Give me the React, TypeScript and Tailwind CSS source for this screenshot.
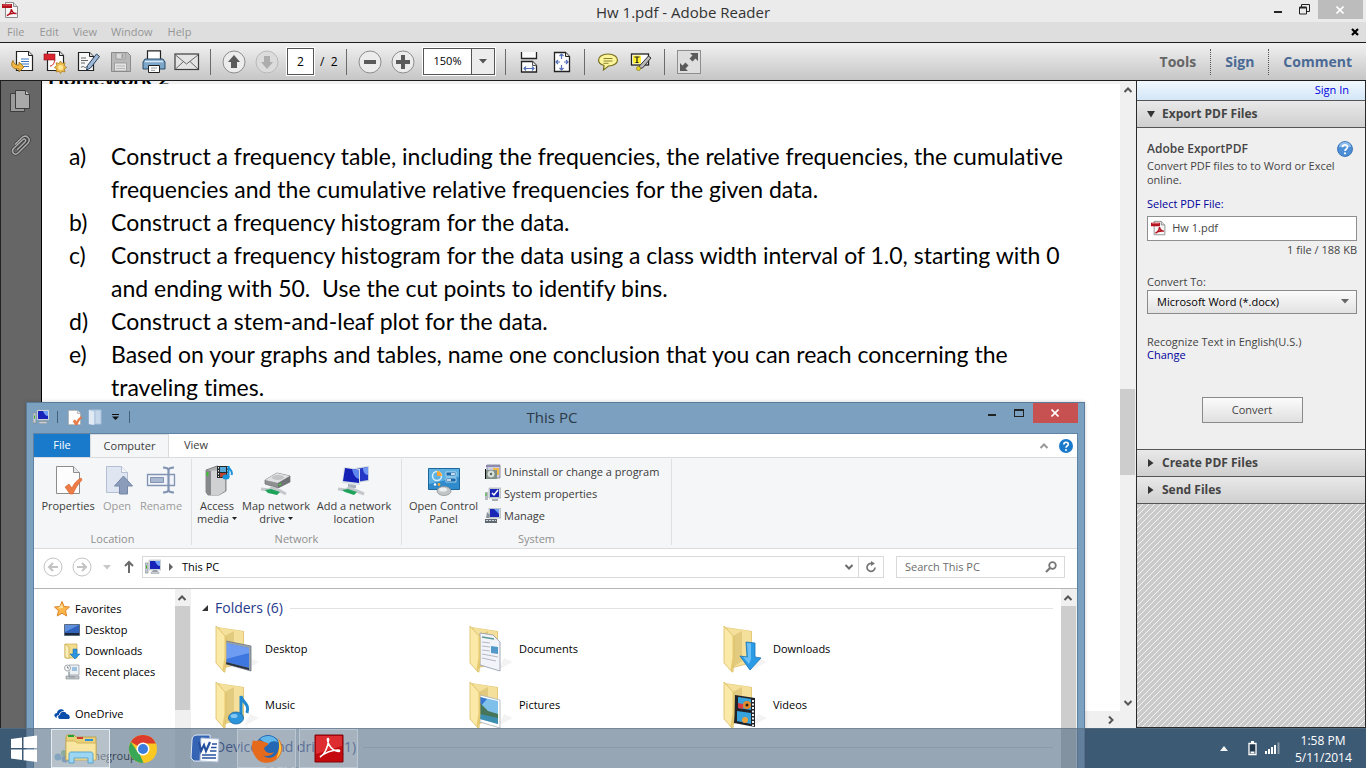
import type { ReactNode } from "react";

const questions = [
  {
    mark: "a)",
    lines: [
      "Construct a frequency table, including the frequencies, the relative frequencies, the cumulative",
      "frequencies and the cumulative relative frequencies for the given data.",
    ],
  },
  { mark: "b)", lines: ["Construct a frequency histogram for the data."] },
  {
    mark: "c)",
    lines: [
      "Construct a frequency histogram for the data using a class width interval of 1.0, starting with 0",
      "and ending with 50.\u00a0 Use the cut points to identify bins.",
    ],
  },
  { mark: "d)", lines: ["Construct a stem-and-leaf plot for the data."] },
  {
    mark: "e)",
    lines: [
      "Based on your graphs and tables, name one conclusion that you can reach concerning the",
      "traveling times.",
    ],
  },
];

/* ---------- shared icons ---------- */

function PdfIcon() {
  return (
    <svg width="17" height="17" viewBox="0 0 17 17">
      <path d="M3.500.5h8l4 4v11h-12z" fill="#f6f6f6" stroke="#8b8b8b" />
      <path d="M11.500.5v4h4" fill="#ddd" stroke="#8b8b8b" />
      <path d="M0 2h10v4H0z" fill="#b3111c" />
      <path d="M1 3h8" stroke="#d9656b" />
      <path d="M5 13.500c2-.5 4-3 4.500-6.500.5 3 2.500 4.500 5 4.500-3-.5-7 0-9.500 2z" fill="none" stroke="#b3111c" strokeWidth="1.500" />
    </svg>
  );
}

function Chevron({ className }: { className?: string }) {
  return (
    <svg width="10" height="8" viewBox="0 0 10 8" className={className}>
      <path d="M1.500 6L5 2.500 8.500 6" fill="none" stroke="currentColor" strokeWidth="2" />
    </svg>
  );
}

function Caret({ className }: { className?: string }) {
  return (
    <svg width="8" height="5" viewBox="0 0 8 5" className={className}>
      <path d="M0 0h8L4 4.500z" fill="currentColor" />
    </svg>
  );
}

function PcIcon() {
  return (
    <svg width="16" height="16" viewBox="0 0 16 16">
      <rect x="0" y="4" width="3" height="10" fill="#c5cbd0" stroke="#7d858c" strokeWidth=".6" />
      <path d="M1 8h1" stroke="#3db52b" strokeWidth="3" />
      <path d="M4 1h12v10H4z" fill="#dbe2e7" stroke="#9aa5ad" strokeWidth=".5" />
      <path d="M5 2h10v8H5z" fill="#1722b8" />
      <path d="M10 2h5v5c-2 0-4-2-5-5z" fill="#6f9ff5" />
      <path d="M8 11h4l1 2H7z" fill="#9aa3a9" />
      <path d="M6 13h8v1.500H6z" fill="#dfe3e6" stroke="#8a9298" strokeWidth=".5" />
    </svg>
  );
}

function CheckPage({ size }: { size: number }) {
  return (
    <svg width={size} height={size} viewBox="0 0 32 32">
      <path d="M4.500 2.500h17l6 6v21h-23z" fill="#fdfdfd" stroke="#8d8d8d" />
      <path d="M21.500 2.500v6h6" fill="#e8e8e8" stroke="#8d8d8d" />
      <path d="M13 23l4-3 3 4c2-5 5-8 9-10l1 2c-4 4-7 9-9 14h-3z" fill="#ec7b46" stroke="#d5602c" strokeWidth=".6" />
    </svg>
  );
}

/* ---------- Reader toolbar ---------- */

function RoundIcon({ d, muted }: { d: string; muted?: boolean }) {
  return (
    <svg width="24" height="24" viewBox="0 0 24 24">
      <circle cx="12" cy="12" r="11" fill={muted ? "#dcdcdc" : "#ececec"} stroke={muted ? "#b9b9b9" : "#8d8d8d"} />
      <path d={d} fill={muted ? "#adadad" : "#5a5a5a"} />
    </svg>
  );
}

function ToolButton({ label, children }: { label: string; children: ReactNode }) {
  return (
    <button aria-label={label} className="flex h-7 w-[33px] items-center justify-center">
      {children}
    </button>
  );
}

function ToolDivider({ className }: { className?: string }) {
  return <div className={`h-[26px] w-px bg-[#6b6b6b] ${className ?? ""}`} />;
}

function OpenIcon() {
  return (
    <svg width="24" height="24" viewBox="0 0 24 24">
      <path d="M6.500 1.500h12l4 4v15h-16z" fill="#fff" stroke="#222" strokeWidth="1.200" />
      <path d="M18.500 1.500v4h4" fill="#ddd" stroke="#222" />
      <path d="M11 9h8M11 11.500h8M11 14h8M11 16.500h8" stroke="#3774c4" strokeWidth="1.200" />
      <path d="M3 10.500c-3 4-1 9 6 8.500v3l5-5-5-5v3c-3 .5-5-1-6-4.500z" fill="#f0b640" stroke="#9a6a12" strokeWidth=".8" />
    </svg>
  );
}

function CreatePdfIcon() {
  return (
    <svg width="24" height="24" viewBox="0 0 24 24">
      <path d="M4.500 1.500h12l4 4v15h-16z" fill="#fff" stroke="#222" strokeWidth="1.200" />
      <path d="M16.500 1.500v4h4" fill="#ddd" stroke="#222" />
      <rect x="1" y="4" width="11" height="6" fill="#d9232e" stroke="#8d1219" strokeWidth=".6" />
      <path d="M7 16c3 0 4-3 5-6" stroke="#c22" fill="none" />
      <path d="M17.500 11l1.500 2.500 3-.8-.8 3 2.500 1.800-2.500 1.500.8 3-3-.8-1.500 2.300-1.500-2.300-3 .8.800-3-2.500-1.500 2.500-1.800-.8-3 3 .8z" fill="#f0be4b" stroke="#a87715" strokeWidth=".7" />
      <circle cx="17.500" cy="17.500" r="2.500" fill="#ffe79a" />
    </svg>
  );
}

function SignIcon() {
  return (
    <svg width="24" height="24" viewBox="0 0 24 24">
      <path d="M2.500 2.500h11l4 4v14h-15z" fill="#f7f7f7" stroke="#222" strokeWidth="1.200" />
      <path d="M13.500 2.500v4h4" fill="#ddd" stroke="#222" />
      <path d="M5 8h5M5 10.500h7M5 13h4M5 17.500c3-3 3 2 6-1" fill="none" stroke="#555" strokeWidth=".9" />
      <path d="M20.500 4l3 2.500-9 11.500-4 2 1-4.500z" fill="#9fb9d6" stroke="#26405d" strokeWidth="1" />
    </svg>
  );
}

function SaveIcon() {
  return (
    <svg width="22" height="22" viewBox="0 0 22 22">
      <path d="M1.500 1.500h16l3 3v16h-19z" fill="#b8b8b8" stroke="#8b8b8b" />
      <path d="M6 2h9v6H6z" fill="#d9d9d9" stroke="#8b8b8b" strokeWidth=".7" />
      <path d="M11.500 3h2v4h-2z" fill="#9a9a9a" />
      <path d="M4.500 12h12v8h-12z" fill="#e3e3e3" stroke="#8b8b8b" strokeWidth=".7" />
      <path d="M6 15h9M6 17.500h9" stroke="#b5b5b5" />
    </svg>
  );
}

function PrintIcon() {
  return (
    <svg width="24" height="24" viewBox="0 0 24 24">
      <path d="M5.500 10V.8h13V10" fill="#fff" stroke="#222" strokeWidth="1.200" />
      <path d="M3 9h18l2 3v7H1v-7z" fill="#7da7ca" stroke="#2b4b68" />
      <path d="M3 11.500h18" stroke="#d6e7f3" strokeWidth="1.500" />
      <path d="M6.500 15.500h11v7h-11z" fill="#fff" stroke="#222" />
      <path d="M9 18h6M9 20.300h4" stroke="#999" />
    </svg>
  );
}

function MailIcon() {
  return (
    <svg width="26" height="18" viewBox="0 0 26 18">
      <rect x="1" y="1" width="23.500" height="15.500" fill="#e4e4e4" stroke="#3e3e3e" strokeWidth="1.200" />
      <path d="M1.500 2l11 9 11.500-9M1.500 16l8-7.500M24 16l-8-7.500" fill="none" stroke="#666" />
    </svg>
  );
}

function FitWidthIcon() {
  return (
    <svg width="18" height="22" viewBox="0 0 18 22">
      <path d="M1.500 1v6.500h15V1" fill="#fafafa" />
      <path d="M1.500 1v6.500h15V1" fill="none" stroke="#222" strokeWidth="1.300" />
      <path d="M1.500 21V10.500h11l4 4V21z" fill="#fff" stroke="#222" strokeWidth="1.300" />
      <path d="M12.500 10.500v4h4" fill="#ddd" stroke="#555" />
      <path d="M3.500 17.500h11M6 15.500l-2 2 2 2M12 15.500l2 2-2 2" fill="none" stroke="#5570b8" strokeWidth="1.200" />
    </svg>
  );
}

function FitPageIcon() {
  return (
    <svg width="18" height="22" viewBox="0 0 18 22">
      <path d="M1.500 1.500h11l4 4v15h-15z" fill="#fff" stroke="#222" strokeWidth="1.300" />
      <path d="M12.500 1.500v4h4" fill="#ddd" stroke="#222" />
      <path d="M8.500 3v5M8.500 14v5M3 11h4M11 11h4M6.500 5l2-2 2 2M6.500 17l2 2 2-2M5 9l-2 2 2 2M13 9l2 2-2 2" fill="none" stroke="#5570b8" strokeWidth="1.200" />
    </svg>
  );
}

function CommentIcon() {
  return (
    <svg width="22" height="20" viewBox="0 0 22 20">
      <path d="M11 2c5.500 0 9.500 2.500 9.500 6s-4 6-9 6l-5 4 .5-4.500C3.500 12.500 1.500 10.500 1.500 8 1.500 4.500 5.500 2 11 2z" fill="#fdf59a" stroke="#77701f" strokeWidth="1.200" />
      <path d="M6.500 6.500h9M6.500 9h9M6.500 11.300h5" stroke="#8a8233" />
    </svg>
  );
}

function HighlightIcon() {
  return (
    <svg width="22" height="20" viewBox="0 0 22 20">
      <rect x="1.500" y="2" width="17" height="11" fill="#fff" stroke="#222" strokeWidth="1.300" />
      <rect x="3" y="3.500" width="8" height="8" fill="#ffef2c" />
      <path d="M4.500 5h5M7 5v5.500M5.500 10.500h3" stroke="#222" strokeWidth="1.200" />
      <path d="M18.500 4l2.500 2-8.500 10-3.500.5.800-3z" fill="#b9b9b9" stroke="#333" />
      <circle cx="8.500" cy="16.500" r="2" fill="#e8d82a" stroke="#8a7d10" strokeWidth=".7" />
    </svg>
  );
}

function FullscreenIcon() {
  return (
    <svg width="24" height="24" viewBox="0 0 24 24">
      <rect x=".5" y=".5" width="23" height="23" fill="#dedede" stroke="#8e8e8e" />
      <path d="M13 3h8v8l-2.500-2.500-3 3-3-3 3-3zM11 21H3v-8l2.500 2.500 3-3 3 3-3 3z" fill="#5a5a5a" />
    </svg>
  );
}

function ReaderToolbar() {
  return (
    <div className="flex h-[39px] shrink-0 items-center border-y border-[#1d1d1d] bg-linear-to-b from-[#f1f1f1] to-[#c6c6c6] pr-[14px] pl-[5px]">
      <ToolButton label="Open"><OpenIcon /></ToolButton>
      <ToolButton label="Create PDF"><CreatePdfIcon /></ToolButton>
      <ToolButton label="Sign document"><SignIcon /></ToolButton>
      <ToolButton label="Save"><SaveIcon /></ToolButton>
      <ToolButton label="Print"><PrintIcon /></ToolButton>
      <ToolButton label="Mail"><MailIcon /></ToolButton>
      <ToolDivider className="mr-[6px] ml-[7px]" />
      <ToolButton label="Previous page"><RoundIcon d="M12 5l6 7h-3v6H9v-6H6z" /></ToolButton>
      <ToolButton label="Next page"><RoundIcon muted d="M12 19l6-7h-3V6H9v6H6z" /></ToolButton>
      <input
        aria-label="Page"
        defaultValue="2"
        className="ml-1 h-[27px] w-[27px] border border-[#555] bg-white text-center text-xs outline outline-white"
      />
      <span className="w-[32px] pl-[6px] text-xs">/&nbsp; 2</span>
      <ToolDivider className="mr-[6px]" />
      <ToolButton label="Zoom out"><RoundIcon d="M6 10h12v4H6z" /></ToolButton>
      <ToolButton label="Zoom in"><RoundIcon d="M10 5h4v5h5v4h-5v5h-4v-5H5v-4h5z" /></ToolButton>
      <div className="ml-1 flex h-[27px] border border-[#555] bg-white outline outline-white">
        <input aria-label="Zoom" defaultValue="150%" className="w-[47px] text-center text-[11px]" />
        <button aria-label="Zoom levels" className="flex w-[23px] items-center justify-center border-l border-[#555] bg-[#ececec]">
          <Caret className="text-[#555]" />
        </button>
      </div>
      <ToolDivider className="mr-[6px] ml-[10px]" />
      <ToolButton label="Fit width"><FitWidthIcon /></ToolButton>
      <ToolButton label="Fit page"><FitPageIcon /></ToolButton>
      <ToolDivider className="mr-[6px] ml-[6px]" />
      <ToolButton label="Add note"><CommentIcon /></ToolButton>
      <ToolButton label="Highlight text"><HighlightIcon /></ToolButton>
      <ToolDivider className="mr-[7px] ml-[7px]" />
      <ToolButton label="Full screen"><FullscreenIcon /></ToolButton>
      <div className="ml-auto flex h-[26px] items-center text-sm font-bold text-[#4a6a95]">
        <button className="px-[14px] text-[#666]">Tools</button>
        <button className="h-full border-x border-dotted border-[#555] px-[14px]">Sign</button>
        <button className="pl-[14px]">Comment</button>
      </div>
    </div>
  );
}

/* ---------- Reader ---------- */

function PanelHeader({ title, open }: { title: string; open?: boolean }) {
  return (
    <button className="flex h-[27px] w-full shrink-0 items-center gap-[7px] border-b border-[#555] bg-linear-to-b from-[#e9e9e9] to-[#cfcfcf] pl-[10px] text-xs font-bold text-[#444]">
      <svg width="8" height="8" viewBox="0 0 8 8">
        <path d={open ? "M0 1h8L4 7.500z" : "M1 0v8l5.500-4z"} fill="#333" />
      </svg>
      {title}
    </button>
  );
}

function ExportPanel() {
  return (
    <aside className="flex w-[230px] shrink-0 flex-col border-x border-b border-[#2a2a2a] bg-[#efefef] text-[11px] text-[#444]">
      <div className="h-5 shrink-0 border-b border-[#555] bg-linear-to-b from-[#f1f8fe] to-[#d3e6f7] pr-4 text-right leading-[18px]">
        <a href="#signin" className="text-[#0000e0]">Sign In</a>
      </div>
      <PanelHeader open title="Export PDF Files" />
      <div className="flex h-[322px] shrink-0 flex-col border-b border-[#555] pr-2 pl-[10px]">
        <div className="mt-[13px] flex items-start justify-between pr-1">
          <h2 className="text-xs leading-4 font-semibold">Adobe ExportPDF</h2>
          <button aria-label="Help">
            <svg width="16" height="16" viewBox="0 0 16 16">
              <circle cx="8" cy="8" r="7.500" fill="#4c8fd6" stroke="#2c66ab" strokeWidth=".8" />
              <path d="M2 6a6 5 0 0 1 12 0z" fill="#8ebcec" />
              <path d="M5.500 6.200C5.500 3 10.500 3 10.500 6 10.500 8 8 8 8 10" fill="none" stroke="#fff" strokeWidth="1.700" />
              <circle cx="8" cy="12.300" r="1.100" fill="#fff" />
            </svg>
          </button>
        </div>
        <p className="mt-[2px] leading-[14px]">Convert PDF files to to Word or Excel online.</p>
        <label htmlFor="pdf-file" className="mt-[9px] leading-4 text-[#00009c]">Select PDF File:</label>
        <div className="mt-1 flex h-[25px] items-center gap-[6px] border border-[#8f8f8f] bg-white pl-[3px]">
          <PdfIcon />
          <input id="pdf-file" readOnly defaultValue="Hw 1.pdf" className="w-full text-[11px]" />
        </div>
        <p className="mt-px text-right leading-4">1 file / 188 KB</p>
        <label htmlFor="format" className="mt-4 leading-4">Convert To:</label>
        <div className="relative">
          <select id="format" className="h-6 w-full appearance-none border border-[#8a8a8a] bg-linear-to-b from-[#fbfbfb] to-[#e2e2e2] pl-[9px] text-black">
            <option>Microsoft Word (*.docx)</option>
          </select>
          <Caret className="pointer-events-none absolute top-[9px] right-2 text-[#666]" />
        </div>
        <div className="mt-[21px] flex flex-col items-start leading-[13px]">
          <span>Recognize Text in English(U.S.)</span>
          <a href="#language" className="text-[#00009c]">Change</a>
        </div>
        <button className="mt-9 h-[26px] w-[101px] self-center border border-[#8a8a8a] bg-linear-to-b from-[#fbfbfb] to-[#e0e0e0]">
          Convert
        </button>
      </div>
      <PanelHeader title="Create PDF Files" />
      <PanelHeader title="Send Files" />
      <div className="flex-1 bg-[#cacaca] bg-[linear-gradient(135deg,transparent_42%,#f4f4f4_42%,#f4f4f4_58%,transparent_58%)] bg-size-[6px_6px]" />
    </aside>
  );
}

function ReaderWindow() {
  return (
    <main className="flex min-h-0 flex-1 flex-col">
      <header className="flex h-[22px] shrink-0 justify-between bg-[#ebebeb]">
        <div className="w-[124px] pt-[2px] pl-[2px]"><PdfIcon /></div>
        <h1 className="text-[15px] leading-6 text-[#333]">Hw 1.pdf - Adobe Reader</h1>
        <div className="flex h-[19px] w-[124px] justify-end pr-[3px]">
          <button aria-label="Minimize" className="w-[26px]">
            <div className="mx-auto mt-[5px] h-[2px] w-2 bg-[#222]" />
          </button>
          <button aria-label="Restore" className="flex w-[27px] items-center justify-center">
            <svg width="11" height="11" viewBox="0 0 11 11">
              <path d="M2.500 3V.5h8v7H8M.5 3.500h7v6.500h-7z" fill="none" stroke="#222" />
              <path d="M.5 3.500h7" stroke="#222" strokeWidth="2" />
            </svg>
          </button>
          <button aria-label="Close" className="flex w-[45px] items-center justify-center bg-[#bcbcbc]">
            <svg width="8" height="8" viewBox="0 0 8 8">
              <path d="M.5.5l7 7M7.500.5l-7 7" stroke="#fff" strokeWidth="1.600" />
            </svg>
          </button>
        </div>
      </header>
      <nav className="flex h-5 shrink-0 items-center bg-[#dedede] pr-[7px] pl-[7px] text-[11px] text-[#969696]">
        <button className="mr-[15px]">File</button>
        <button className="mr-[14px]">Edit</button>
        <button className="mr-[14px]">View</button>
        <button className="mr-[15px]">Window</button>
        <button>Help</button>
        <button aria-label="Close document" className="ml-auto">
          <svg width="8" height="8" viewBox="0 0 8 8">
            <path d="M1 1l6 6M7 1L1 7" stroke="#000" strokeWidth="2.200" />
          </svg>
        </button>
      </nav>
      <ReaderToolbar />
      <div className="flex min-h-0 flex-1">
        <div className="flex w-[42px] shrink-0 flex-col items-center gap-[18px] border-r border-l border-r-black border-l-[#222] bg-[#666] pt-2 pr-[3px]">
          <button aria-label="Page thumbnails">
            <svg width="24" height="26" viewBox="0 0 24 26">
              <path d="M2.500 4.500h14v18h-14z" fill="#9a9a9a" stroke="#3d3d3d" />
              <path d="M7.500 1.500h10l4 4v14h-14z" fill="#a9a9a9" stroke="#3d3d3d" />
              <path d="M17.500 1.500v4h4" fill="#c9c9c9" stroke="#3d3d3d" />
            </svg>
          </button>
          <button aria-label="Attachments">
            <svg width="24" height="24" viewBox="0 0 24 24" fill="none">
              <path d="M9 17l8-8c2-2-.5-4-2-2.500L5.500 15.500c-3 3.500 1.500 7.500 4.500 4.500l10-10c3.500-4.500-2-9-6-5.500L7 11.500" stroke="#3b3b3b" strokeWidth="3" />
              <path d="M9 17l8-8c2-2-.5-4-2-2.500L5.500 15.500c-3 3.500 1.500 7.500 4.500 4.500l10-10c3.500-4.500-2-9-6-5.500L7 11.500" stroke="#adadad" strokeWidth="1.500" />
            </svg>
          </button>
        </div>
        <article className="min-w-0 flex-1 overflow-hidden bg-white font-['Lato',sans-serif] text-[23px] leading-[33px] text-black [font-variant-ligatures:none]">
          <div className="flex h-[3px] items-end overflow-hidden bg-[#f2f2f2] pl-[6px]">
            <h2 className="-mb-[10px] text-[21px] font-bold">Homework 2</h2>
          </div>
          <ol className="mt-14 pl-[27px]">
            {questions.map((q) => (
              <li key={q.mark} className="flex whitespace-nowrap">
                <span className="w-[42px] shrink-0">{q.mark}</span>
                <p>
                  {q.lines.map((line) => (
                    <span key={line} className="block">{line}</span>
                  ))}
                </p>
              </li>
            ))}
          </ol>
        </article>
        <div className="flex w-4 shrink-0 flex-col bg-[#f0f0f0] pt-[5px] text-[#555]">
          <Chevron className="self-center" />
          <div className="mt-[295px] h-[86px] w-[15px] bg-[#cdcdcd]" />
          <Chevron className="mt-auto mb-[21px] rotate-180 self-center" />
        </div>
        <ExportPanel />
      </div>
      {/* corner of the horizontal scrollbar */}
      <div className="absolute right-[230px] bottom-10 flex h-[17px] w-[60px] items-center justify-end bg-[#f0f0f0] pr-5 text-[#555]">
        <Chevron className="rotate-90" />
      </div>
    </main>
  );
}

/* ---------- Explorer ribbon ---------- */

function OpenPageIcon() {
  return (
    <svg width="32" height="32" viewBox="0 0 32 32">
      <path d="M5.500 2.500h15l6 6v20h-21z" fill="#dfe6f1" stroke="#b4bfd3" />
      <path d="M20.500 2.500v6h6" fill="#f4f6fa" stroke="#b4bfd3" />
      <path d="M22.500 12l9 10h-5v8h-8v-8h-5z" fill="#8b9cbb" stroke="#7486a8" />
    </svg>
  );
}

function RenameIcon() {
  return (
    <svg width="32" height="32" viewBox="0 0 32 32">
      <path d="M2.500 10.500h27v11h-27z" fill="#f0f3f9" stroke="#8293b4" strokeWidth="1.300" />
      <path d="M5.500 13.500h13v5h-13z" fill="#a9b7d1" stroke="#8293b4" />
      <path d="M18 3.500c2.500 0 5 .5 5.500 2.500.5-2 3-2.500 5.500-2.500M18 28.500c2.500 0 5-.5 5.500-2.500.5 2 3 2.500 5.500 2.500M23.500 6v20" fill="none" stroke="#8293b4" strokeWidth="2.200" />
    </svg>
  );
}

function MediaIcon() {
  return (
    <svg width="32" height="32" viewBox="0 0 32 32">
      <path d="M5 6l11-4 9 3v22l-7 4H7l-2-3z" fill="#aeb0b1" stroke="#6c6e70" strokeWidth=".8" />
      <path d="M5 6l5 1v24H7l-2-3z" fill="#86898b" />
      <path d="M10 7l14-2v22l-6 4h-8z" fill="#cfd1d2" />
      <path d="M6.500 8v4" stroke="#38c52b" strokeWidth="1.800" />
      <path d="M16 2h12v12H16z" fill="#26292c" />
      <path d="M19 3h6v5h-6z" fill="#57a9d8" />
      <path d="M19 9h6v4h-6z" fill="#b8442d" />
      <path d="M17.500 3v10M26.500 3v10" stroke="#eee" strokeDasharray="1.500 1.500" />
      <path d="M27.500 13V2c0 4 5 4 3 9" fill="none" stroke="#1793dc" strokeWidth="2" />
      <ellipse cx="25" cy="13" rx="3.500" ry="2.500" fill="#1793dc" />
    </svg>
  );
}

function DriveIcon() {
  return (
    <svg width="32" height="32" viewBox="0 0 32 32">
      <path d="M5 16l12-7 13 3v6l-12 6-13-4z" fill="#8d9091" stroke="#6b6e70" strokeWidth=".7" />
      <path d="M5 16l12-7 13 3-12 7z" fill="#dfe1e2" />
      <ellipse cx="18" cy="13.500" rx="6" ry="2.500" fill="#c2c5c6" />
      <path d="M18 19v5l12-6v-6z" fill="#707375" />
      <path d="M19 21l2-1" stroke="#40d330" strokeWidth="1.500" />
      <path d="M1 25l8 1 3-2 8 3 6 3" fill="none" stroke="#c3c8cc" strokeWidth="3" />
      <path d="M5 26l6-1 9 3-3 3-9-2z" fill="#1fa35b" />
    </svg>
  );
}

function NetworkIcon() {
  return (
    <svg width="32" height="32" viewBox="0 0 32 32">
      <path d="M17 4l14-2v15l-14 2z" fill="#c9d3dc" />
      <path d="M18 5l12-2v13l-12 2z" fill="#2437c5" />
      <path d="M25 4l5-1v8c-3 0-5-3-5-7z" fill="#7297f2" />
      <path d="M6 3l16 2v16L4 19z" fill="#d8e0e6" />
      <path d="M7 4l14 2v13L5 17z" fill="#1520b5" />
      <path d="M14 5l7 1v9c-4-1-6-5-7-10z" fill="#5f87ee" />
      <path d="M10 20l8 1v3h-8z" fill="#a9b2b9" />
      <path d="M0 25l8 1 3-2 8 3 7 3" fill="none" stroke="#c3c8cc" strokeWidth="3" />
      <path d="M4 26l6-1 9 3-3 3-9-3z" fill="#1fa35b" />
    </svg>
  );
}

function ControlPanelIcon() {
  return (
    <svg width="34" height="32" viewBox="0 0 34 32">
      <path d="M1.500 4.500h31v21h-31z" fill="#2f8bcb" stroke="#1d669d" />
      <path d="M2 5h30v8L2 20z" fill="#5cb0e2" />
      <circle cx="10" cy="12" r="4.500" fill="none" stroke="#d7effb" strokeWidth="1.500" />
      <path d="M10 12V7a5 5 0 0 1 5 5z" fill="#f8a63a" />
      <path d="M19 8h10v4H19zM19 14h10v4H19z" fill="#1767a8" stroke="#c7e6f8" strokeWidth=".8" />
      <path d="M24 10h4M20 16h4" stroke="#fff" strokeWidth="1.500" />
      <circle cx="8" cy="20.500" r="1.200" fill="#fff" />
      <circle cx="12" cy="20.500" r="1.400" fill="#f8a63a" />
      <ellipse cx="17" cy="27" rx="7" ry="4.500" fill="#c3c6c8" stroke="#898c8f" strokeWidth=".7" />
      <ellipse cx="16" cy="25.500" rx="4" ry="2" fill="#eceeef" />
    </svg>
  );
}

function UninstallIcon() {
  return (
    <svg width="16" height="16" viewBox="0 0 16 16">
      <path d="M2 1h13v13H2z" fill="#cfcfdf" stroke="#77788e" strokeWidth=".8" />
      <path d="M1 1h14v2H1z" fill="#8c8cb0" />
      <path d="M8 4h6v7H8z" fill="#f1b94e" />
      <path d="M0 5h1v10H0z" fill="#111" />
      <path d="M1 6h11v9H1z" fill="#7f9186" />
      <circle cx="6" cy="10" r="4" fill="#d9e0dc" stroke="#66756c" strokeWidth=".6" />
      <circle cx="6" cy="10" r="1.200" fill="#586860" />
    </svg>
  );
}

function SystemIcon() {
  return (
    <svg width="16" height="16" viewBox="0 0 16 16">
      <path d="M0 6h3v8H0z" fill="#b5bbc0" />
      <path d="M1 7v3" stroke="#3db52b" />
      <path d="M4 2h12v10H4z" fill="#d1d7dc" stroke="#8c959c" strokeWidth=".5" />
      <path d="M5 3h9v8H5z" fill="#1a27b5" />
      <path d="M7 7l2 2 4-5" fill="none" stroke="#fff" strokeWidth="1.500" />
      <path d="M7 13h6v2H7z" fill="#a5adb3" />
    </svg>
  );
}

function ManageIcon() {
  return (
    <svg width="16" height="16" viewBox="0 0 16 16">
      <path d="M4 0h12v10H4z" fill="#d1d7dc" stroke="#8c959c" strokeWidth=".5" />
      <path d="M5 1h9v8H5z" fill="#1a27b5" />
      <path d="M9 1h5v5z" fill="#6f9ff5" />
      <path d="M2 4l3 3-1 3H1z" fill="#8a949c" />
      <path d="M0 11h12v4H0z" fill="#5f6a72" />
      <path d="M1 12.500h10" stroke="#d4d9dd" strokeDasharray="2 1" />
    </svg>
  );
}

function RibbonButton({ label, second, menu, muted, className, children }: {
  label: string;
  second?: string;
  menu?: boolean;
  muted?: boolean;
  className: string;
  children: ReactNode;
}) {
  return (
    <button className={`flex shrink-0 flex-col items-center leading-[13px] whitespace-nowrap ${muted ? "text-[#9b9b9b]" : "text-[#3c3c3c]"} ${className}`}>
      {children}
      <span className="mt-[3px]">{label}</span>
      {second && (
        <span className="flex items-center gap-[3px]">
          {second}
          {menu && <svg width="5" height="4" viewBox="0 0 5 4"><path d="M0 0h5L2.500 3z" fill="#222" /></svg>}
        </span>
      )}
    </button>
  );
}

function RibbonGroup({ name, className, children }: { name: string; className: string; children: ReactNode }) {
  return (
    <section className={`mt-px flex h-[86px] shrink-0 flex-col justify-between border-r border-[#dfe0e2] ${className}`}>
      <div className="flex pt-[5px]">{children}</div>
      <h3 className="text-center leading-[13px] text-[#8f8f8f]">{name}</h3>
    </section>
  );
}

const systemItems = [
  { label: "Uninstall or change a program", icon: <UninstallIcon /> },
  { label: "System properties", icon: <SystemIcon /> },
  { label: "Manage", icon: <ManageIcon /> },
];

function Ribbon() {
  return (
    <div className="flex h-[92px] shrink-0 border-y border-[#dadbdc] bg-[#f5f6f7]">
      <RibbonGroup name="Location" className="w-[158px]">
        <RibbonButton label="Properties" className="ml-[6px] w-14"><CheckPage size={32} /></RibbonButton>
        <RibbonButton label="Open" muted className="w-[42px]"><OpenPageIcon /></RibbonButton>
        <RibbonButton label="Rename" muted className="w-[46px]"><RenameIcon /></RibbonButton>
      </RibbonGroup>
      <RibbonGroup name="Network" className="w-[210px]">
        <RibbonButton label="Access" second="media" menu className="ml-1 w-[42px]"><MediaIcon /></RibbonButton>
        <RibbonButton label="Map network" second="drive" menu className="w-[76px]"><DriveIcon /></RibbonButton>
        <RibbonButton label="Add a network" second="location" className="w-20"><NetworkIcon /></RibbonButton>
      </RibbonGroup>
      <RibbonGroup name="System" className="w-[270px]">
        <RibbonButton label="Open Control" second="Panel" className="w-[83px]"><ControlPanelIcon /></RibbonButton>
        <div className="flex flex-col gap-[6px]">
          {systemItems.map((item) => (
            <button key={item.label} className="flex h-4 items-center gap-[3px] whitespace-nowrap text-[#3c3c3c]">
              {item.icon}
              {item.label}
            </button>
          ))}
        </div>
      </RibbonGroup>
    </div>
  );
}

/* ---------- Explorer content ---------- */

function Folder({ children }: { children: ReactNode }) {
  return (
    <svg width="48" height="48" viewBox="0 0 48 48">
      <path d="M30 45l15-8-9-4z" fill="#f3f3f3" />
      <path d="M3 2l27 4v32l-19 5z" fill="#e3c978" />
      <path d="M5 2.500l24 4v31l-17 4z" fill="#f4e09a" />
      <path d="M11 11l9-5v30l-9 6z" fill="#cfb361" opacity=".5" />
      {children}
      <path d="M2 1l10 11v22l-1 13h-1L2 38z" fill="#fbe9a8" stroke="#d8bb62" strokeWidth=".8" />
      <path d="M12 12v21l-1.500 14-2-2 2-13V11z" fill="#e6ca72" />
    </svg>
  );
}

const folders = [
  {
    name: "Desktop",
    art: (
      <>
        <path d="M12 16l25 5v25l-25-7z" fill="#9aa3ab" stroke="#6c757d" strokeWidth=".8" />
        <path d="M12 18l23 5v20l-23-6z" fill="#3f77e0" />
        <path d="M12 18l23 5v5L12 34z" fill="#6d9cf2" />
        <path d="M12 37l23 6v2l-23-6z" fill="#27303f" />
      </>
    ),
  },
  {
    name: "Documents",
    art: (
      <>
        <path d="M12 8l13 2 7 7v29l-20-6z" fill="#f3f4f9" stroke="#8f96a8" strokeWidth=".8" />
        <path d="M14 12l12 2" stroke="#5b9a94" strokeWidth="1.500" />
        <path d="M14 17l8 1M14 21l8 1M14 25l8 1M14 29l16 3M14 33l14 3" stroke="#b4b9c8" strokeWidth="1.200" />
        <path d="M23 21l7 1v7l-7-1z" fill="#5298c9" />
      </>
    ),
  },
  {
    name: "Downloads",
    art: (
      <>
        <path d="M24 17l9 1v14l6 1-11 12-10-14 7 1z" fill="#2c9be6" stroke="#1673b5" strokeWidth=".8" />
        <path d="M25 18l4 .5V34l-2 5-6-7 5 .5z" fill="#6cc0f5" />
      </>
    ),
  },
  {
    name: "Music",
    art: (
      <>
        <path d="M27 39V15c1 7 9 7 6 17" fill="none" stroke="#2389cf" strokeWidth="3" />
        <ellipse cx="22" cy="37" rx="7.500" ry="6" fill="#2c94da" stroke="#14659e" strokeWidth=".8" />
        <ellipse cx="20" cy="35" rx="3.500" ry="2" fill="#86c8f2" />
      </>
    ),
  },
  {
    name: "Pictures",
    art: (
      <>
        <path d="M12 14l20 5v28l-20-6z" fill="#fff" stroke="#a9b0b5" strokeWidth=".8" />
        <path d="M12 16l18 4v23l-18-5z" fill="#7fc0ea" />
        <path d="M12 16l7 2-7 8z" fill="#3877cf" />
        <path d="M12 22l8 8 10 3v5l-18-4z" fill="#46755a" />
        <path d="M12 33l18 4v6l-18-5z" fill="#3d8fb0" />
      </>
    ),
  },
  {
    name: "Videos",
    art: (
      <>
        <path d="M13 14l20 3v29l-21-4z" fill="#20242a" />
        <path d="M16 16l13 2v11l-13-2zM15 30l14 2v11l-14-3z" fill="#37a3dc" />
        <circle cx="25" cy="24" r="4" fill="#e08a2c" />
        <circle cx="25" cy="24" r="1.500" fill="#222" />
        <path d="M16 22l5 1v5l-5-1z" fill="#d93c45" />
        <circle cx="23" cy="39" r="3" fill="#e9a23a" />
        <path d="M31 19v26" stroke="#f2f2f2" strokeWidth="2" strokeDasharray="2 1.500" />
      </>
    ),
  },
];

const favorites = [
  {
    name: "Desktop",
    icon: (
      <svg width="16" height="16" viewBox="0 0 16 16">
        <path d="M.5 2.500h15v11H.5z" fill="#2f63bd" stroke="#5a6b80" />
        <path d="M1 3h14L1 10z" fill="#5e90dd" />
        <path d="M1 12h14" stroke="#1c2738" strokeWidth="2" />
      </svg>
    ),
  },
  {
    name: "Downloads",
    icon: (
      <svg width="16" height="16" viewBox="0 0 16 16">
        <path d="M1 1h12v14H1z" fill="#f2dc8d" stroke="#c9a94c" strokeWidth=".7" />
        <path d="M1 1l4 3v12l-4-2z" fill="#fbeeb8" stroke="#c9a94c" strokeWidth=".7" />
        <path d="M9 6h4v5h3l-5 5-5-5h3z" fill="#2c95e0" stroke="#1567a5" strokeWidth=".5" />
      </svg>
    ),
  },
  {
    name: "Recent places",
    icon: (
      <svg width="16" height="16" viewBox="0 0 16 16">
        <path d="M5 1h10v10H5z" fill="#eef1f4" stroke="#8a949d" strokeWidth=".7" />
        <path d="M8 4h5M8 6h5" stroke="#4a8fca" />
        <path d="M2 12h13v3H2z" fill="#c3c8cc" stroke="#7e868c" strokeWidth=".6" />
        <path d="M5 8v5h6" fill="none" stroke="#8a949d" />
        <circle cx="3.500" cy="4" r="3" fill="#f7f7f7" stroke="#8a949d" strokeWidth=".8" />
        <path d="M3.500 2.500V4H5" fill="none" stroke="#555" strokeWidth=".7" />
      </svg>
    ),
  },
];

function SectionTitle({ children }: { children: ReactNode }) {
  return (
    <h2 className="flex items-center gap-[7px] text-sm leading-5 text-[#26398c]">
      <svg width="6" height="6" viewBox="0 0 6 6"><path d="M6 0v6H0z" fill="#333" /></svg>
      {children}
      <span className="h-px flex-1 bg-[#e2e2e2]" />
    </h2>
  );
}

function ExplorerWindow() {
  return (
    <section className="absolute top-[402px] right-[281px] bottom-0 left-[26px] flex flex-col border border-b-0 border-[#5a7c9c] bg-[#7ba0c0] px-[6px] text-[11px] shadow-[0_0_4px_#0003]">
      <header className="flex h-[30px] shrink-0 items-start justify-between">
        <div className="flex h-7 w-[124px] items-center">
          <PcIcon />
          <span className="mx-2 h-3 w-px bg-[#45617b]" />
          <button aria-label="Properties"><CheckPage size={17} /></button>
          <button aria-label="New folder" className="ml-[5px]">
            <svg width="16" height="16" viewBox="0 0 16 16">
              <path d="M1 1h12v14H1z" fill="#c5d7ea" stroke="#a9c0da" />
              <path d="M1 1l5 2v13l-5-1z" fill="#dfeaf5" />
              <path d="M7 1v13" stroke="#a9c0da" />
            </svg>
          </button>
          <button aria-label="Customize" className="ml-[8px]">
            <svg width="7" height="6" viewBox="0 0 7 6"><path d="M0 .5h7" stroke="#111" /><path d="M0 2.500h7L3.500 6z" fill="#111" /></svg>
          </button>
          <span className="ml-[10px] h-3 w-px bg-[#45617b]" />
        </div>
        <h2 className="text-[15px] leading-7 text-[#2c3a47]">This PC</h2>
        <div className="flex w-[131px] justify-end">
          <button aria-label="Minimize" className="flex h-5 w-[27px] items-center justify-center">
            <div className="mt-1 h-[2px] w-2 bg-[#222]" />
          </button>
          <button aria-label="Maximize" className="flex h-5 w-[27px] items-center justify-center">
            <div className="h-2 w-[10px] border border-t-2 border-[#222]" />
          </button>
          <button aria-label="Close" className="flex h-5 w-[45px] items-center justify-center bg-[#c75050]">
            <svg width="8" height="8" viewBox="0 0 8 8"><path d="M.5.5l7 7M7.500.5l-7 7" stroke="#fff" strokeWidth="1.600" /></svg>
          </button>
        </div>
      </header>
      <div className="flex min-h-0 flex-1 flex-col border border-b-0 border-[#5f83a5] bg-white">
        <div className="flex h-[23px] shrink-0 items-stretch pr-1 text-[#3c3c3c]">
          <button className="w-14 bg-[#1979ca] text-white">File</button>
          <button className="-mb-px w-[79px] border border-b-0 border-[#dadbdc] bg-[#f5f6f7]">Computer</button>
          <button className="w-[54px]">View</button>
          <div className="ml-auto flex items-center gap-[10px]">
            <Chevron className="text-[#999]" />
            <button aria-label="Help">
              <svg width="14" height="14" viewBox="0 0 14 14">
                <circle cx="7" cy="7" r="7" fill="#1979ca" />
                <path d="M4.800 5.500C4.800 2.600 9.300 2.600 9.300 5.200 9.300 7 7 7 7 8.800" fill="none" stroke="#fff" strokeWidth="1.600" />
                <circle cx="7" cy="11" r="1" fill="#fff" />
              </svg>
            </button>
          </div>
        </div>
        <Ribbon />
        <div className="flex h-10 shrink-0 items-center border-b border-[#b5b5b5] pr-3 pb-[3px] pl-[9px]">
          <button aria-label="Back">
            <svg width="20" height="20" viewBox="0 0 20 20" fill="none" stroke="#c3c3c3"><circle cx="10" cy="10" r="9" /><path d="M15 10H6M10 6l-4 4 4 4" strokeWidth="2" /></svg>
          </button>
          <button aria-label="Forward" className="ml-[9px]">
            <svg width="20" height="20" viewBox="0 0 20 20" fill="none" stroke="#c3c3c3"><circle cx="10" cy="10" r="9" /><path d="M5 10h9M10 6l4 4-4 4" strokeWidth="2" /></svg>
          </button>
          <Caret className="ml-[11px] text-[#c8c8c8]" />
          <button aria-label="Up" className="ml-3">
            <svg width="12" height="14" viewBox="0 0 12 14" fill="none" stroke="#6a6a6a" strokeWidth="2"><path d="M6 13V2M2 6l4-4 4 4" /></svg>
          </button>
          <div className="ml-[7px] flex h-[22px] flex-1 items-center border border-[#d9d9d9] pl-[2px]">
            <PcIcon />
            <svg width="4" height="8" viewBox="0 0 4 8" className="ml-2"><path d="M0 0v8l4-4z" fill="#666" /></svg>
            <span className="ml-[9px] text-black">This PC</span>
            <Chevron className="mr-1 ml-auto rotate-180 text-[#6b6b6b]" />
            <button aria-label="Refresh" className="flex h-full w-[25px] items-center justify-center border-l border-[#d9d9d9]">
              <svg width="12" height="12" viewBox="0 0 12 12"><path d="M7 2.500A4 4 0 1 0 10 6.500" fill="none" stroke="#777" strokeWidth="1.700" /><path d="M6 0l4 2.500L6 5z" fill="#777" /></svg>
            </button>
          </div>
          <div className="ml-3 flex h-[22px] w-[169px] items-center border border-[#d9d9d9] pr-[7px] pl-2">
            <input aria-label="Search This PC" placeholder="Search This PC" className="min-w-0 flex-1 placeholder:text-[#6d6d6d]" />
            <svg width="12" height="12" viewBox="0 0 12 12" fill="none" stroke="#777">
              <circle cx="7.500" cy="4.500" r="3.300" strokeWidth="1.800" />
              <path d="M5 7L1 11" strokeWidth="2.200" />
            </svg>
          </div>
        </div>
        <div className="flex min-h-0 flex-1 overflow-hidden text-black">
          <nav className="w-[141px] shrink-0 pt-[9px] leading-[21px]">
            <a href="#favorites" className="flex items-center gap-[5px] pl-5">
              <svg width="16" height="16" viewBox="0 0 16 16"><path d="M8 .5l2.200 5 5.300.5-4 3.600 1.200 5.400L8 12.200 3.300 15l1.200-5.400-4-3.600 5.300-.5z" fill="#fbb64a" stroke="#d97a1c" strokeWidth=".9" /><path d="M8 3l1 4-5 .5z" fill="#ffe3a5" /></svg>
              Favorites
            </a>
            {favorites.map((item) => (
              <a key={item.name} href="#folder" className="flex items-center gap-[5px] pl-[30px]">
                {item.icon}
                {item.name}
              </a>
            ))}
            <a href="#onedrive" className="mt-[21px] flex items-center gap-[5px] pl-5">
              <svg width="16" height="16" viewBox="0 0 16 16"><path d="M3 12c-4-1-3-5 0-5 0-4 6-5 7-2-3 0-5 2-5 4-2 0-3 2-2 3z" fill="#0b4dab" /><path d="M6 13c-3-1-2-4 0-4 0-4 6-4 6.500-1C16 8 17 13 14 13z" fill="#0b4dab" /></svg>
              OneDrive
            </a>
            <a href="#homegroup" className="mt-[21px] flex items-center gap-[5px] pl-5">
              <svg width="16" height="16" viewBox="0 0 16 16"><circle cx="4" cy="9" r="3.500" fill="#4b9bd0" /><circle cx="10" cy="5" r="3" fill="#5db562" /><circle cx="11" cy="11" r="3.500" fill="#3f79b8" /></svg>
              Homegroup
            </a>
          </nav>
          <div className="flex w-4 shrink-0 flex-col bg-[#f0f0f0] pt-[5px] text-[#555]">
            <Chevron className="ml-[2px]" />
            <div className="mt-1 h-[104px] w-[15px] bg-[#cdcdcd]" />
          </div>
          <div className="min-w-0 flex-1 pt-[9px] pr-2 pl-[11px]">
            <SectionTitle>Folders (6)</SectionTitle>
            <ul className="mt-[3px] grid grid-cols-[254px_254px_254px] pl-3">
              {folders.map((folder) => (
                <li key={folder.name} className="flex h-14 items-center gap-[3px]">
                  <Folder>{folder.art}</Folder>
                  {folder.name}
                </li>
              ))}
            </ul>
            <div className="mt-1"><SectionTitle>Devices and drives (1)</SectionTitle></div>
            <p className="mt-[6px] pl-[62px] leading-4">OS (C:)</p>
          </div>
          <div className="flex w-4 shrink-0 flex-col bg-[#f0f0f0] pt-[5px] text-[#555]">
            <Chevron className="ml-[2px]" />
            <div className="mt-1 w-[15px] flex-1 bg-[#cdcdcd]" />
          </div>
        </div>
      </div>
    </section>
  );
}

/* ---------- Taskbar ---------- */

function TaskButton({ label, state, children }: { label: string; state?: "active" | "open"; children: ReactNode }) {
  const look =
    state === "active"
      ? "border-[#e6edf2] bg-white/30"
      : state === "open"
        ? "border-[#c3cfd9]/70 bg-white/15"
        : "border-transparent";
  return (
    <button aria-label={label} className={`flex h-[39px] w-[59px] items-center justify-center border ${look}`}>
      {children}
    </button>
  );
}

function Taskbar() {
  return (
    <footer className="absolute inset-x-0 bottom-0 flex h-10 items-center gap-[3px] border-t border-[#5f7386]/60 bg-[#526b82]/60 pr-[15px]">
      <button aria-label="Start" className="flex w-12 justify-center">
        <svg width="28" height="28" viewBox="0 0 28 28" fill="#fff"><path d="M1 4l11-1.500V13H1zM13.500 2.200L27 .5V13H13.500zM1 14.500h11V25L1 23.500zM13.500 14.500H27V27l-13.500-1.700z" /></svg>
      </button>
      <TaskButton label="File Explorer" state="active">
        <svg width="34" height="32" viewBox="0 0 34 32">
          <path d="M2 4l1-2h7l2 2h20v22H2z" fill="#e9d179" stroke="#b89a3f" strokeWidth=".8" />
          <path d="M4 2h6v2H4z" fill="#22a13a" /><path d="M13 4h6v2h-6z" fill="#d33a2c" /><path d="M21 6h8v2h-8z" fill="#2d8ed8" />
          <path d="M2 8h9l2 2h19v17H2z" fill="#f7e5a0" stroke="#c9ac52" strokeWidth=".8" />
          <path d="M5 30v-9c0-1 1-2 2-2h20c1 0 2 1 2 2v9h-5v-5H10v5z" fill="#9dd6f2" stroke="#4f9fcb" strokeWidth=".9" />
        </svg>
      </TaskButton>
      <TaskButton label="Chrome">
        <svg width="30" height="30" viewBox="0 0 30 30">
          <circle cx="15" cy="15" r="14" fill="#f9c823" />
          <path d="M15 15L2.900 8A14 14 0 0 1 27.800 9.500H15z" fill="#dd3b2b" />
          <path d="M15 15l-3 6 3.500 8A14 14 0 0 1 2.900 8l6.800 10z" fill="#3aa757" />
          <circle cx="15" cy="15" r="6.500" fill="#fff" /><circle cx="15" cy="15" r="5" fill="#3b7ddd" />
        </svg>
      </TaskButton>
      <TaskButton label="Word">
        <svg width="32" height="30" viewBox="0 0 32 30">
          <path d="M3 6c0-3 2-5 5-5h13v26H5L2 24z" fill="#3564b5" stroke="#dce7f7" />
          <path d="M12 4l18 1-1 23-18-1z" fill="#fbfcfe" stroke="#b4c3da" />
          <path d="M10 8l2 9 3-6 2 6 4-9" fill="none" stroke="#24509f" strokeWidth="2.200" />
          <path d="M23 10h5M22 13.500h5.500M21 17h6.500M13 21h14M13 24h14" stroke="#24509f" strokeWidth="1.600" />
        </svg>
      </TaskButton>
      <TaskButton label="Firefox" state="open">
        <svg width="32" height="32" viewBox="0 0 32 32">
          <circle cx="17" cy="14" r="12" fill="#2467b4" />
          <path d="M9 6c5-5 15-4 18 3-5-2-9 0-10 3z" fill="#63b7e8" />
          <path d="M2 7c1 1 2 1 4 1 2-1 5 0 7 1l4 1c1 2-2 3-4 5 1 5 6 6 10 4-2 4-8 5-11 3 6 6 15 2 16-8 1-4 0-7-1-9 6 7 5 16-1 21-7 6-18 5-22-3C1 19 0 13 2 7z" fill="#e66a1c" />
          <path d="M27 6c5 7 4 15-2 20 3-6 4-13 2-20z" fill="#fbc93d" />
        </svg>
      </TaskButton>
      <TaskButton label="Adobe Reader" state="open">
        <svg width="30" height="29" viewBox="0 0 30 29">
          <path d="M1 1h28v27H1z" fill="#c4090f" stroke="#7d0407" />
          <path d="M2 2h26v10L2 20z" fill="#dd2d31" />
          <path d="M6 23c4-2 8-9 8.500-17 .5-2-1.500-2-1 0 1 6 5 11 11 11.500 1.500 0 1.500-1.500-.5-1.500-6 0-12 2-18 7z" fill="none" stroke="#fff" strokeWidth="1.600" />
        </svg>
      </TaskButton>
      <div className="ml-auto flex items-center text-white">
        <svg width="8" height="5" viewBox="0 0 8 5"><path d="M0 5h8L4 0z" fill="#f4f4f4" /></svg>
        <svg width="9" height="15" viewBox="0 0 9 15" className="ml-5">
          <path d="M1 2.500h7v11H1z" fill="#22384c" stroke="#fff" strokeWidth="1.300" /><path d="M3 1h3" stroke="#fff" strokeWidth="2" /><path d="M2.500 11.500h4" stroke="#fff" strokeWidth="2" />
        </svg>
        <svg width="16" height="13" viewBox="0 0 16 13" className="ml-2">
          <path d="M0 9h2v3H0zM3 7h2v5H3zM6 5h2v7H6zM9 3h2v9H9z" fill="#fff" /><path d="M12.500.5h2v11.500h-2z" fill="#8a9aa8" />
        </svg>
        <div className="ml-[14px] w-14 text-center text-xs leading-[17px] whitespace-nowrap">
          1:58 PM
          <br />
          5/11/2014
        </div>
      </div>
    </footer>
  );
}

export default function App() {
  return (
    <div className="relative flex h-screen flex-col overflow-hidden bg-[#204161] pb-10 font-['Open_Sans',sans-serif] text-black">
      <ReaderWindow />
      <ExplorerWindow />
      <Taskbar />
    </div>
  );
}
